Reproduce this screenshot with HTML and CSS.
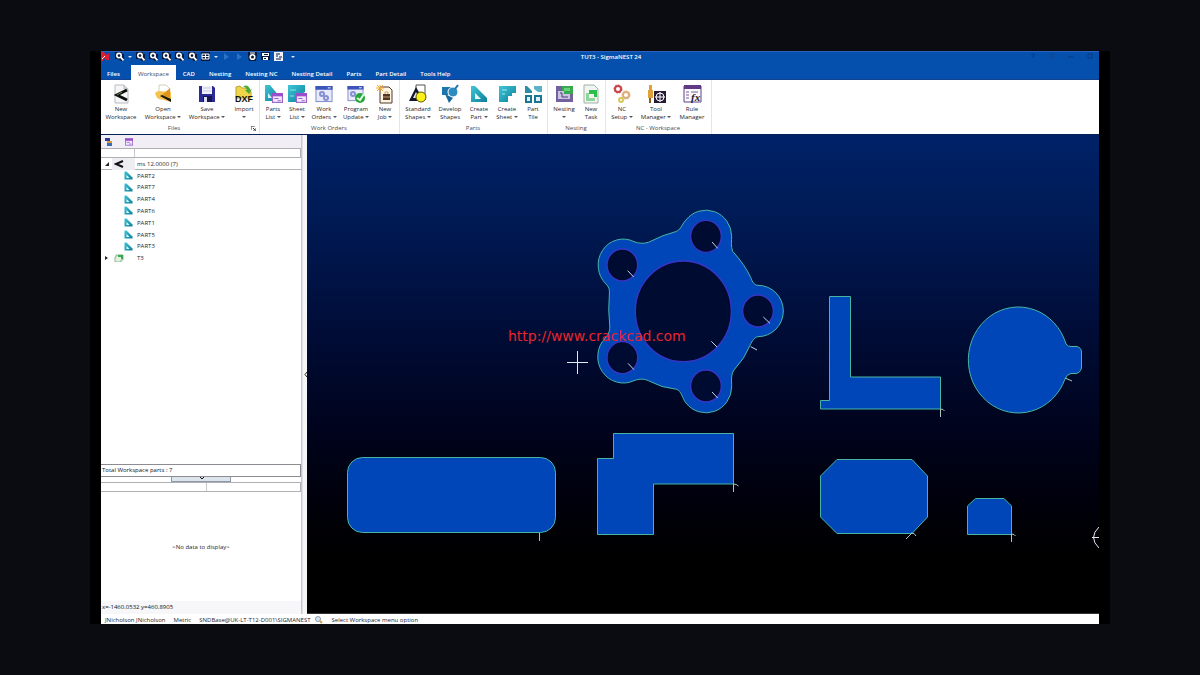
FILE: index.html
```
<!DOCTYPE html>
<html lang="en">
<head>
<meta charset="utf-8">
<title>TUT3 - SigmaNEST 24</title>
<link rel="stylesheet" href="styles.css">
</head>
<body>
<svg class="defs" aria-hidden="true">
  <defs>
    <linearGradient id="teal" x1="0" y1="0" x2="1" y2="1"><stop offset="0" stop-color="#3fc6d6"/><stop offset="1" stop-color="#0d7f9c"/></linearGradient>
    <symbol id="mag" viewBox="0 0 9 9"><path d="M0 0h7v2h2v7H6L3 7H0z" fill="#0a1a3c"/><circle cx="4" cy="3.6" r="2.200" fill="none" stroke="#fff" stroke-width="1.600"/><path d="M5.500 5l3 3.400" stroke="#fff" stroke-width="1.800"/></symbol>
    <symbol id="triangle" viewBox="0 0 18 18"><path d="M1 1h4l12 12v4H1z" fill="url(#teal)"/><path d="M5 8l6 6H5z" fill="#e6fafc"/></symbol>
    <symbol id="window" viewBox="0 0 18 18"><rect x=".5" y=".5" width="17" height="16" fill="#e8eafb" stroke="#7b86c4"/><path d="M0 0h18v4H0z" fill="#3b55bb"/><path d="M13 2h3" stroke="#fff"/></symbol>
    <symbol id="formmini" viewBox="0 0 10 9"><rect x=".5" y=".5" width="9" height="8" fill="#f3eaff" stroke="#9a63c8"/><path d="M0 0h10v3H0z" fill="#9a50cc"/><path d="M2 5h4M5 7h3" stroke="#9a63c8"/></symbol>
  </defs>
</svg>
<main class="frame">
  <div class="app">
    <header class="titlebar">
      <div class="quick">
        <svg class="logo" viewBox="0 0 8 9"><path d="M0 0h3l2 3 3-2v7H5L3 6 2 9H0z" fill="#e01c30"/><path d="M1 7l3-3" stroke="#fff"/></svg>
        <button class="q" aria-label="Zoom"><svg><use href="#mag"/></svg></button>
        <button class="q-drop" aria-label="Zoom options"></button>
        <button class="q" aria-label="Zoom in"><svg><use href="#mag"/></svg></button>
        <button class="q" aria-label="Zoom out"><svg><use href="#mag"/></svg></button>
        <button class="q" aria-label="Zoom window"><svg><use href="#mag"/></svg></button>
        <button class="q" aria-label="Zoom all"><svg><use href="#mag"/></svg></button>
        <button class="q" aria-label="Zoom previous"><svg><use href="#mag"/></svg></button>
        <button class="q" aria-label="Grid"><svg viewBox="0 0 9 9"><path d="M0 0h9v9H0z" fill="#0a1a3c"/><path d="M1 2h7v5H1zM4.500 2v5M1 4.500h7" fill="none" stroke="#fff"/></svg></button>
        <button class="q-drop" aria-label="Grid options"></button>
        <button class="q" aria-label="Undo"><svg viewBox="0 0 9 9"><path d="M2 1l5 4-5 3z" fill="#2b72c6"/></svg></button>
        <button class="q" aria-label="Redo"><svg viewBox="0 0 9 9"><path d="M2 1l5 4-5 3z" fill="#2b72c6"/></svg></button>
        <button class="q" aria-label="Settings"><svg viewBox="0 0 9 9"><path d="M0 0h9v3L8 9H1L0 4z" fill="#0a1a3c"/><circle cx="4.500" cy="5" r="2.300" fill="none" stroke="#fff" stroke-width="1.600"/><path d="M2 1h5" stroke="#fff"/></svg></button>
        <button class="q" aria-label="Print"><svg viewBox="0 0 9 9"><path d="M0 0h9v8H0z" fill="#0a1a3c"/><path d="M1 1h7v3H1zM2 5h5v3H2z" fill="#fff"/><path d="M3 2.500h4M3 6.500h2" stroke="#0a1a3c"/></svg></button>
        <button class="q" aria-label="Report"><svg viewBox="0 0 9 9"><path d="M0 0h9v9H0z" fill="#eef3ff"/><path d="M2 2h4M2 4h2M5 5h3M2 7h5" stroke="#0a1a3c"/></svg></button>
        <button class="q-drop q-more" aria-label="Customize toolbar"></button>
      </div>
      <h1 class="title">TUT3 - SigmaNEST 24</h1>
      <div class="controls">
        <button aria-label="Help"><svg viewBox="0 0 6 6"><path d="M1 1h3v2H3v2" fill="none" stroke="#063b86"/></svg></button>
        <button aria-label="Restore"><svg viewBox="0 0 6 6"><path d="M1 5V1h4v4z" fill="none" stroke="#0a469a"/></svg></button>
        <button aria-label="Minimize"><svg viewBox="0 0 6 6"><path d="M0 4h6" stroke="#063b86"/></svg></button>
        <button aria-label="Close"><svg viewBox="0 0 6 6"><path d="M1 1h4v4H1z" fill="none" stroke="#063b86"/></svg></button>
      </div>
    </header>
    <nav class="tabs">
      <button class="tab tab-files">Files</button>
      <button class="tab active">Workspace</button>
      <button class="tab">CAD</button>
      <button class="tab">Nesting</button>
      <button class="tab">Nesting NC</button>
      <button class="tab">Nesting Detail</button>
      <button class="tab">Parts</button>
      <button class="tab">Part Detail</button>
      <button class="tab">Tools Help</button>
    </nav>
    <section class="ribbon">
      <div class="group">
        <div class="tools">
          <button class="tool w40"><svg viewBox="0 0 20 20"><path d="M4 1h9l4 4v14H4z" fill="#f6f6f8" stroke="#b9b9c2"/><path d="M13 1v4h4" fill="#d6ded0" stroke="#b9b9c2"/><path d="M16 6L6 11l10 5" fill="none" stroke="#0c100c" stroke-width="3"/><path d="M6 11l5-3" stroke="#6f8f3c"/></svg><span>New<br>Workspace</span></button>
          <button class="tool w44"><svg viewBox="0 0 20 20"><path d="M6 1h7l4 4v10H6z" fill="#fff" stroke="#d8cfb6"/><path d="M2 9l3-2 13 1v10L4 14z" fill="#f5c24c"/><path d="M17 4l-8 7 8 3z" fill="#e0951f"/><path d="M9 11l9 4v3L7 12z" fill="#1d1608"/></svg><span>Open<br>Workspace <i></i></span></button>
          <button class="tool w44"><svg viewBox="0 0 20 20"><path d="M2 2h14l2 2v14H2z" fill="#2c2a94"/><path d="M5 2h10v8H5z" fill="#f1f1fb"/><path d="M6 4h8M6 7h8" stroke="#c9c9e2"/><path d="M6 12h9v6H6z" fill="#15154f"/><path d="M7 13h3v5H7z" fill="#dcdcf4"/></svg><span>Save<br>Workspace <i></i></span></button>
          <button class="tool w30"><svg viewBox="0 0 20 20"><path d="M2 3l4-1 2 2h7l2 4v6H2z" fill="#efd54b" stroke="#b7a336"/><path d="M9 2q6-2 7 4l2-1-3 5-4-4h2q-1-3-4-4" fill="#49ab3c"/><text x="10" y="18" text-anchor="middle" class="dxf">DXF</text></svg><span>Import<br><i></i></span></button>
        </div>
        <div class="group-name">Files<svg class="launcher" viewBox="0 0 5 5"><path d="M0 4V0h4M2 2l2 2M5 2v3H2" fill="none" stroke="#333"/></svg></div>
      </div>
      <div class="group">
        <div class="tools">
          <button class="tool w24"><svg viewBox="0 0 20 20"><path d="M2 1h5l9 11v5H2z" fill="url(#teal)"/><path d="M5 9l4 5H5z" fill="#d8f4f8"/><use href="#formmini" x="9" y="9" width="11" height="10"/></svg><span>Parts<br>List <i></i></span></button>
          <button class="tool w24"><svg viewBox="0 0 20 20"><path d="M1 1h17v7l-6 3v7H1z" fill="url(#teal)"/><path d="M3 6h6M3 12h4" stroke="#8de3ec"/><use href="#formmini" x="9" y="9" width="11" height="10"/></svg><span>Sheet<br>List <i></i></span></button>
          <button class="tool w30"><svg viewBox="0 0 20 20"><use href="#window" x="1" y="2" width="18" height="17"/><circle cx="8" cy="10" r="2" fill="none" stroke="#8590d2" stroke-width="2"/><circle cx="12" cy="14" r="2" fill="none" stroke="#8590d2" stroke-width="2"/></svg><span>Work<br>Orders <i></i></span></button>
          <button class="tool w34"><svg viewBox="0 0 20 20"><use href="#window" x="1" y="2" width="17" height="16"/><circle cx="7" cy="10" r="2" fill="none" stroke="#8590d2" stroke-width="2"/><circle cx="14" cy="14" r="5" fill="#25a53c"/><path d="M11 14l3 2 4-6" fill="none" stroke="#d9ffd9" stroke-width="2"/></svg><span>Program<br>Update <i></i></span></button>
          <button class="tool w24"><svg viewBox="0 0 20 20"><path d="M5 3h9l3 3v13H5z" fill="#fff3e2" stroke="#4b3a2d"/><path d="M8 10h7v6H8z" fill="#503724"/><path d="M10 10V8h3v2M8 13h7" fill="none" stroke="#c69a6b"/><path d="M5 1v7M1 4h8M2 1l6 6M8 1L2 7" stroke="#f2a531"/></svg><span>New<br>Job <i></i></span></button>
        </div>
        <div class="group-name">Work Orders</div>
      </div>
      <div class="group">
        <div class="tools">
          <button class="tool w34"><svg viewBox="0 0 20 20"><path d="M8 1h9v15H8z" fill="#fff" stroke="#555"/><path d="M8 3l8 14H1z" fill="#11162c"/><path d="M8 8l3 6H5z" fill="#e8e8f0"/><circle cx="13" cy="13" r="5" fill="#fbf01a" stroke="#5d5900"/></svg><span>Standard<br>Shapes <i></i></span></button>
          <button class="tool w30"><svg viewBox="0 0 20 20"><path d="M2 3h10v8H2z" fill="#1d75ad"/><circle cx="13" cy="8" r="5" fill="#2c8bc0" stroke="#fff"/><path d="M5 10l8 4-4 5z" fill="#17689f"/><path d="M15 5l3-4" stroke="#1d75ad" stroke-width="2"/></svg><span>Develop<br>Shapes</span></button>
          <button class="tool w28"><svg viewBox="0 0 20 20"><use href="#triangle" x="1" y="1" width="18" height="18"/></svg><span>Create<br>Part <i></i></span></button>
          <button class="tool w28"><svg viewBox="0 0 20 20"><path d="M2 2h17v7h-4v3h-4v6H2z" fill="url(#teal)"/><path d="M5 6h5M5 10h3" stroke="#a5edf2"/></svg><span>Create<br>Sheet <i></i></span></button>
          <button class="tool w24"><svg viewBox="0 0 20 20"><path d="M2 2h2l5 5v2H2z" fill="#2d8da8"/><path d="M11 2h8v6h-4l-4-3z" fill="#5bb3c7"/><path d="M3 12h5v6H3zM12 12h6v6h-6z" fill="#dff3f8" stroke="#1c7592" stroke-width="2"/></svg><span>Part<br>Tile</span></button>
        </div>
        <div class="group-name">Parts</div>
      </div>
      <div class="group">
        <div class="tools">
          <button class="tool w30"><svg viewBox="0 0 20 20"><path d="M2 2h17v16H2z" fill="#75609f"/><path d="M8 2h11v8H8z" fill="#38a851"/><path d="M4 7h6v3h6v5H4z" fill="#c9c4df"/><path d="M10 4h6v3h-6z" fill="#64d576"/><path d="M6 9h2v4h6" fill="none" stroke="#4f3d77"/></svg><span>Nesting<br><i></i></span></button>
          <button class="tool w24"><svg viewBox="0 0 20 20"><path d="M3 1h10l4 4v14H3z" fill="#f0f5f1" stroke="#9fb2a4"/><path d="M8 6h8v7h-3v-3H8z" fill="#2fbd4c"/><path d="M5 9h3v5h6v3H5z" fill="#8ed49b"/></svg><span>New<br>Task</span></button>
        </div>
        <div class="group-name">Nesting</div>
      </div>
      <div class="group">
        <div class="tools">
          <button class="tool w30"><svg viewBox="0 0 20 20"><circle cx="6" cy="5" r="3" fill="none" stroke="#c7464b" stroke-width="2"/><circle cx="6" cy="5" r="4" fill="none" stroke="#c7464b" stroke-dasharray="2 1"/><circle cx="14" cy="11" r="3" fill="none" stroke="#dfae77" stroke-width="2"/><circle cx="14" cy="11" r="4" fill="none" stroke="#dfae77" stroke-dasharray="2 1"/><circle cx="9" cy="16" r="2" fill="none" stroke="#d7c65a" stroke-width="2"/></svg><span>NC<br>Setup <i></i></span></button>
          <button class="tool w38"><svg viewBox="0 0 20 20"><path d="M3 1h3v9H3zM2 6h5v8H2z" fill="#e0a13a"/><path d="M4 14v5" stroke="#8a5a1d" stroke-width="2"/><path d="M8 7h12v12H8z" fill="#291a37"/><circle cx="14" cy="13" r="4" fill="#291a37" stroke="#fff"/><path d="M14 8v10M9 13h10" stroke="#fff"/></svg><span>Tool<br>Manager <i></i></span></button>
          <button class="tool w34"><svg viewBox="0 0 20 20"><path d="M2 2h17v16H2z" fill="#faf7ff" stroke="#614283"/><path d="M2 1h17v4H2z" fill="#603a85"/><path d="M4 8h3M9 8h7M4 11h3M4 14h3" stroke="#79678f"/><text x="9" y="17" class="fx">fx</text></svg><span>Rule<br>Manager</span></button>
        </div>
        <div class="group-name">NC - Workspace</div>
      </div>
    </section>
    <section class="body">
      <aside class="side">
        <div class="side-tools">
          <button aria-label="Sort"><svg viewBox="0 0 8 8"><path d="M0 0h5v3H0z" fill="#2c3c96"/><path d="M2 3h5v2H2z" fill="#d99a38"/><path d="M2 5h5v3H2z" fill="#3a6ab0"/></svg></button>
          <button aria-label="Properties"><svg><use href="#formmini"/></svg></button>
        </div>
        <div class="cols"><span></span><span></span></div>
        <ul class="tree">
          <li class="root"><svg class="arrow" viewBox="0 0 4 4"><path d="M4 0v4H0z" fill="#222"/></svg><span class="thumb"><svg viewBox="0 0 10 8"><path d="M9 1L2 4l7 3" fill="none" stroke="#111" stroke-width="2"/></svg></span>ms 12.0000 (7)</li>
          <li class="part"><svg><use href="#triangle"/></svg>PART2</li>
          <li class="part"><svg><use href="#triangle"/></svg>PART7</li>
          <li class="part"><svg><use href="#triangle"/></svg>PART4</li>
          <li class="part"><svg><use href="#triangle"/></svg>PART6</li>
          <li class="part"><svg><use href="#triangle"/></svg>PART1</li>
          <li class="part"><svg><use href="#triangle"/></svg>PART5</li>
          <li class="part"><svg><use href="#triangle"/></svg>PART3</li>
          <li class="task"><svg class="arrow" viewBox="0 0 4 4"><path d="M0 0l3 2-3 2z" fill="#222"/></svg><span class="thumb"><svg viewBox="0 0 10 8"><path d="M2 1h7v5H7v2H1V3h1z" fill="#dff2e0" stroke="#8fb493"/><path d="M4 1h5v4H7V3H4z" fill="#3ba850"/></svg></span>T3</li>
        </ul>
        <div class="total">Total Workspace parts : 7</div>
        <div class="split"><button aria-label="Collapse details"><svg viewBox="0 0 5 3"><path d="M1 0l2 2 2-2" fill="none" stroke="#111"/></svg></button></div>
        <div class="cols lower"><span></span><span></span></div>
        <div class="empty">&lt;No data to display&gt;</div>
        <div class="coords">x=-1460.0532 y=460.8905</div>
      </aside>
      <div class="gutter"><button aria-label="Collapse panel"><svg viewBox="0 0 3 5"><path d="M3 0L1 2.500 3 5" fill="none" stroke="#222"/></svg></button></div>
      <div class="canvas">
        <svg class="drawing" viewBox="307 135 792 478" preserveAspectRatio="xMidYMid meet" role="img" aria-label="Workspace parts">
          <g class="shape" transform="translate(580 190) scale(.33333)">
            <path class="outline3" d="M290 124C304 118 308 98 318 90A77 79 0 0 1 455 139C455 150 452 170 458 184Q495 225 512 262C518 278 524 286 534 286A76 77 0 0 1 534 440C524 442 518 450 510 466Q495 505 462 540C452 556 455 570 455 590A77 79 0 0 1 318 639C308 628 304 602 290 598Q245 594 205 572C190 565 175 567 162 572A77 79 0 0 1 76 444C88 430 90 420 89 405Q84 360 88 315C90 298 86 290 78 282A75 78 0 0 1 162 155C175 160 190 162 205 157Q250 134 290 124Z"/>
            <g class="hole"><ellipse cx="310" cy="364" rx="144" ry="151"/><ellipse cx="378" cy="139" rx="46" ry="48"/><ellipse cx="127" cy="225" rx="46" ry="48"/><ellipse cx="127" cy="503" rx="46" ry="48"/><ellipse cx="378" cy="588" rx="46" ry="48"/><ellipse cx="534" cy="363" rx="46" ry="48"/></g>
            <path class="lead3" d="M396 156l17 19M143 242l18 19M550 381l20 19M394 454l17 17M144 520l18 19M396 606l17 18M512 470l19 10"/>
          </g>
          <g class="outline">
            <path d="M829.500 296.500H850.500V377H940.500V409H820.500V400.500H829.500z"/>
            <path d="M1066 344Q1068 347 1072 346.500H1077Q1081.500 348 1081.500 352V368Q1080 373 1076 373.500H1071Q1067 374 1065 379A50 53 0 1 1 1066 344z"/>
            <rect x="347.500" y="457.500" width="208" height="75" rx="15"/>
            <path d="M613.500 433.500H733.500V484H653.500V534.500H597.500V458.500H613.500z"/>
            <path d="M837 459.500H912L927.500 476V517L912 533.500H837L820.500 517V476z"/>
            <path d="M975.500 498.500H1004L1011.500 506V534.500H967.500V506z"/>
          </g>
          <path class="lead" d="M940.500 409v8M940.500 409q3 0 4 2M1065 378l7 3M539.500 533v8M733.500 484v8M733.500 484q3 0 5 2M912 533l-6 6M911 533q4 0 5 3M1011.500 534v8M1011.500 534q3 0 4 2"/>
          <path class="cursor" d="M567 362.500h21M577.500 351v23"/>
          <path class="cursor" d="M1099 527Q1088 537.500 1099 548M1092 537.500h7"/>
          <text class="link" x="508" y="341">http://www.crackcad.com</text>
        </svg>
      </div>
    </section>
    <footer class="status">
      <span>JNicholson JNicholson</span><span>Metric</span><span>SNDBase@UK-LT-T12-D001\SIGMANEST</span>
      <svg viewBox="0 0 8 8"><circle cx="3" cy="3" r="2.500" fill="#d9e4ef" stroke="#8d9baa"/><path d="M5 5l2 2" stroke="#c9a35a" stroke-width="2"/></svg>
      <span>Select Workspace menu option</span>
    </footer>
  </div>
</main>
</body>
</html>
```

FILE: styles.css
```
* { box-sizing: border-box; }

body {
  margin: 0;
  min-height: 100vh;
  padding: 51px 0;
  display: flex;
  justify-content: center;
  background: #0a0c12;
  font: 6px/8px "Open Sans", "Noto Sans", sans-serif;
  color: #26262c;
}

button {
  border: 0;
  padding: 0;
  background: none;
  font: inherit;
  color: inherit;
}

svg { display: block; }
.defs { position: absolute; width: 0; height: 0; }

.frame {
  width: 85%;
  padding: 0 11px;
  background: #000;
  display: flex;
}

.app {
  flex: 1;
  min-width: 0;
  display: flex;
  flex-direction: column;
  background: #fff;
}

.titlebar {
  height: 14px;
  display: grid;
  grid-template-columns: 1fr auto 1fr;
  background: #0450ac;
  border-top: 1px solid #2a62bd;
  color: #fff;
}

.quick { display: flex; align-items: flex-start; }
.logo { width: 8px; height: 9px; margin-right: 4px; }
.q { width: 13px; display: flex; justify-content: center; }
.q svg { width: 9px; height: 9px; }
.q-drop { width: 8px; height: 9px; display: flex; justify-content: center; align-items: center; }
.q-drop::before { content: ""; border: 2px solid transparent; border-top-color: #dce8fa; border-bottom: 0; }
.q-more { width: 16px; }

.title { margin: 0; padding-left: 22px; font-size: 6px; line-height: 10px; font-weight: 600; }
.controls { display: flex; justify-content: flex-end; align-items: flex-start; gap: 13px; padding: 1px 6px 0 0; }
.controls svg { width: 6px; height: 6px; }

.tabs {
  height: 15px;
  display: flex;
  align-items: stretch;
  background: #0450ac;
  border-bottom: 1px solid #16438f;
}

.tab { padding: 3px 7px 0; color: #fff; font-weight: 600; white-space: nowrap; }
.tab-files { padding: 3px 11px 0 6px; }
.tab.active { background: #fff; color: #3c4a66; font-weight: 400; margin-bottom: -1px; }

.ribbon { height: 55px; display: flex; border-bottom: 1px solid #06205a; }
.group { display: flex; flex-direction: column; padding: 4px 2px 1px 1px; border-right: 1px solid #e4e4ea; }
.group:first-child { padding: 4px 0 1px; }
.tools { display: flex; flex: 1; }
.tool { display: flex; flex-direction: column; align-items: center; gap: 1px; white-space: nowrap; text-align: center; }
.tool svg { width: 20px; height: 20px; }
.tool i { display: inline-block; vertical-align: middle; border: 2px solid transparent; border-top-color: #555; border-bottom: 0; }
.w24 { width: 24px; }
.w28 { width: 28px; }
.w30 { width: 30px; }
.w34 { width: 34px; }
.w38 { width: 38px; }
.w40 { width: 40px; }
.w44 { width: 44px; }
.group-name { height: 9px; text-align: center; color: #4a4a52; position: relative; }
.group:first-child .group-name { padding-right: 12px; }
.launcher { position: absolute; right: 3px; top: 2px; width: 5px; height: 5px; }
.dxf { font: bold 9px "Liberation Sans", sans-serif; fill: #111; }
.fx { font: italic bold 11px "Liberation Serif", serif; fill: #20182c; }

.body { flex: 1; display: flex; min-height: 0; }
.side { width: 201px; display: flex; flex-direction: column; border-right: 1px solid #c8c8ce; }
.side-tools { height: 13px; display: flex; align-items: center; gap: 12px; padding-left: 4px; background: #f1eff5; }
.side-tools svg { width: 8px; height: 8px; }
.cols { height: 10px; display: flex; border: 1px solid #b0b0b4; border-left: 0; background: #fff; }
.cols span:first-child { width: 34px; border-right: 1px solid #c8c8cc; }
.tree {
  margin: 0 0 auto;
  padding: 0;
  list-style: none;
  height: 106px;
  display: grid;
  grid-template-rows: repeat(9, 1fr);
}
.tree li { display: flex; align-items: center; }
.arrow { width: 4px; height: 4px; margin: 0 3px 0 4px; }
.thumb { width: 25px; padding: 1px 2px; align-self: stretch; display: flex; align-items: center; }
.thumb svg { width: 10px; height: 8px; }
.root { box-shadow: inset 0 -1px #b4b4b4; }
.root .thumb { background: #ededf2; width: 23px; margin-right: 2px; }
.part { padding-left: 23px; gap: 4px; }
.part svg { width: 9px; height: 9px; }
.total { height: 13px; padding: 0 1px; line-height: 11px; border: 1px solid #8c8c92; border-left: 0; color: #111; }
.split { height: 5px; display: flex; justify-content: center; }
.split button { width: 60px; display: flex; justify-content: center; background: #dce4ec; border: 1px solid #8b98a6; border-top: 0; }
.split svg { width: 5px; height: 3px; }
.lower span:first-child { width: 106px; }
.empty { height: 109px; display: flex; align-items: center; justify-content: center; }
.coords { height: 13px; padding-left: 1px; line-height: 13px; background: #f7f7fa; color: #111; }

.gutter { width: 5px; display: flex; align-items: center; justify-content: flex-end; background: #f6f6f9; border-left: 1px solid #e0e0e6; }
.gutter svg { width: 3px; height: 5px; }

.canvas {
  flex: 1;
  min-width: 0;
  display: flex;
  border-bottom: 1px solid #333;
  background: linear-gradient(#002268 0%, #001a54 18%, #000d38 40%, #00031c 62%, #00000a 78%, #000 88%);
}
.drawing { width: 100%; height: 100%; }
.outline > *, .outline3 { fill: #0046b9; stroke: #48b5a4; }
.outline3 { stroke-width: 3; }
.hole { fill: #000b32; stroke: #3a34c6; stroke-width: 4; }
.lead, .lead3, .cursor { fill: none; stroke: #a9c6b8; }
.lead3 { stroke: #c8d6ee; stroke-width: 3; }
.cursor { stroke: #e6e9f2; }
.link { font: 14px "DejaVu Sans", Verdana, sans-serif; fill: #e8242c; }

.status { height: 10px; display: flex; align-items: center; gap: 8px; padding: 2px 0 0 4px; background: #fff; white-space: nowrap; }
.status svg { width: 8px; height: 8px; margin-left: -3px; }
```
